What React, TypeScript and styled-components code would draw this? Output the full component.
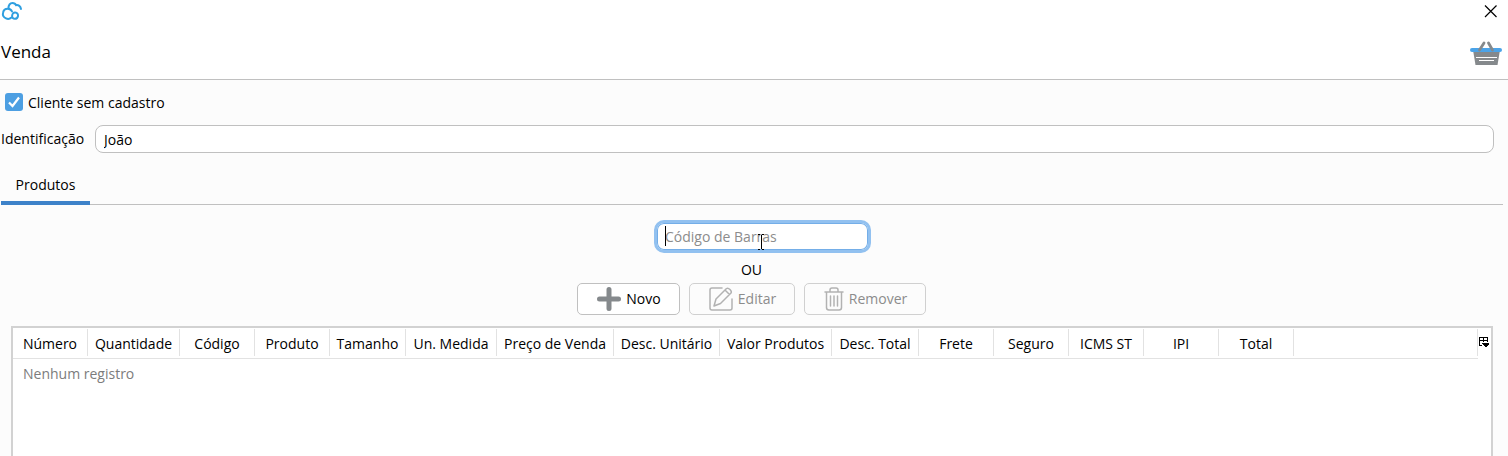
import React from "react";
import styled, { createGlobalStyle } from "styled-components";

const GlobalStyle = createGlobalStyle`
  *, *::before, *::after { box-sizing: border-box; }
  body {
    margin: 0;
    background: #fcfcfc;
    color: #000;
    font-family: "Open Sans", "Noto Sans", sans-serif;
    font-size: 14px;
    line-height: 20px;
  }
  button, input { font: inherit; color: inherit; }
`;

const Window = styled.div`
  display: flex;
  flex-direction: column;
  min-height: 100vh;
`;

const TitleBar = styled.div`
  display: flex;
  justify-content: space-between;
  align-items: flex-start;
  height: 24px;
  padding: 0 10px 0 1px;
  background: #fff;
  svg { display: block; }
`;

const CloseButton = styled.button`
  margin-top: 4px;
  padding: 0;
  border: 0;
  background: none;
`;

const Header = styled.header`
  display: flex;
  justify-content: space-between;
  align-items: center;
  height: 56px;
  padding: 0 5px 0 1px;
  background: #fff;
  border-bottom: 1px solid #c0c0c0;
`;

const Title = styled.h1`
  margin: 0;
  font-size: 17px;
  font-weight: 400;
  line-height: 24px;
`;

const Form = styled.div`
  display: flex;
  flex-direction: column;
  gap: 12px;
  padding: 13px 14px 0 1px;
`;

const CheckLabel = styled.label`
  display: flex;
  align-items: center;
  gap: 5px;
  padding-left: 4px;
`;

const Checkbox = styled.input`
  appearance: none;
  width: 18px;
  height: 18px;
  margin: 0 0 2px;
  border-radius: 3px;
  background: #4d9fe2
    url("data:image/svg+xml,%3Csvg xmlns='http://www.w3.org/2000/svg' viewBox='0 0 18 18'%3E%3Cpath d='M4 9.5l3.5 3.5L14 4.5' fill='none' stroke='white' stroke-width='2.2'/%3E%3C/svg%3E");
`;

const Field = styled.div`
  display: flex;
  align-items: center;
  gap: 8px;
`;

const FieldLabel = styled.label`
  width: 86px;
  white-space: nowrap;
`;

const TextInput = styled.input`
  flex: 1;
  min-width: 0;
  height: 28px;
  padding: 0 8px;
  border: 1px solid #c0c0c0;
  border-radius: 8px;
  background: #fff;
  outline: none;
`;

const Tabs = styled.div`
  display: flex;
  margin: 12px 5px 0 1px;
  border-bottom: 1px solid #c0c0c0;
`;

const Tab = styled.button`
  width: 89px;
  height: 40px;
  margin-bottom: -1px;
  padding: 3px 0 0;
  border: 0;
  border-bottom: 4px solid #3d82c9;
  background: none;
`;

const Entry = styled.div`
  display: flex;
  flex-direction: column;
  align-items: center;
  padding: 15px 5px 0 0;
`;

const BarcodeBox = styled.div`
  position: relative;
  width: 217px;
  margin-left: 22px;
`;

const BarcodeInput = styled.input`
  display: block;
  width: 100%;
  height: 33px;
  padding: 0 8px;
  border: 3px solid #92c1f0;
  border-radius: 10px;
  background: #fff;
  box-shadow: inset 0 0 0 1px #74aee8;
  outline: none;
  &::placeholder { color: #8c8c8c; opacity: 1; }
`;

const Caret = styled.span`
  position: absolute;
  left: 11px;
  top: 6px;
  width: 1px;
  height: 20px;
  background: #000;
`;

const Pointer = styled.svg`
  position: absolute;
  left: 103px;
  top: 14px;
`;

const Or = styled.span`
  margin: 7px 0 3px;
`;

const Actions = styled.div`
  display: flex;
  gap: 9px;
`;

const ActionButton = styled.button<{ $width: number }>`
  display: flex;
  align-items: center;
  justify-content: center;
  gap: 4px;
  width: ${(p) => p.$width}px;
  height: 32px;
  padding: 0;
  border: 1px solid #c0c0c0;
  border-radius: 5px;
  background: #fff;
  &:disabled {
    border-color: #d0d0d0;
    background: #fcfcfc;
    color: #8c8c8c;
  }
`;

const Grid = styled.div`
  flex: 1;
  display: flex;
  align-items: flex-start;
  margin: 11px 15px 0 11px;
  border: 2px solid #d2d2d2;
  border-bottom: 0;
  background: #fff;
`;

const Table = styled.table`
  flex: 1;
  min-width: 0;
  table-layout: fixed;
  border-collapse: collapse;
`;

const HeadCell = styled.th`
  padding: 1px 0 2px;
  border-bottom: 1px solid #e2e2e2;
  font-weight: 400;
  white-space: nowrap;
`;

const HeadText = styled.span`
  display: block;
  height: 27px;
  border-right: 1px solid #e2e2e2;
  line-height: 29px;
`;

const EmptyCell = styled.td`
  padding: 5px 10px;
  color: #7c7c7c;
`;

const ColumnButton = styled.button`
  width: 13px;
  padding: 9px 0 0 1px;
  border: 0;
  background: none;
  svg { display: block; }
`;

const columns: [string, number][] = [
  ["Número", 75],
  ["Quantidade", 92],
  ["Código", 75],
  ["Produto", 75],
  ["Tamanho", 76],
  ["Un. Medida", 91],
  ["Preço de Venda", 117],
  ["Desc. Unitário", 106],
  ["Valor Produtos", 112],
  ["Desc. Total", 87],
  ["Frete", 75],
  ["Seguro", 75],
  ["ICMS ST", 75],
  ["IPI", 75],
  ["Total", 75],
];

const CloudLogo = () => (
  <svg width="22" height="22" viewBox="0 0 22 22" fill="none" stroke="#2f9fe0" strokeWidth="2" strokeLinecap="round">
    <path d="M10.500 17.500C9 18.800 6.700 19.200 5 18.300 2.700 17.300 1.500 15.200 2 13c.4-2.700 2.500-4.300 5-4.200 2 .2 3.400 1.200 4 2.700" />
    <path d="M7.500 8.500C7.500 5 9 3 11.500 3c1.800 0 2.900.7 3.500 2.200 2.500-.5 4.500 1 5 3.800" />
    <path d="M14.200 12.500c2.100.2 3 1.700 2.800 3.500-.3 1.800-1.400 2.800-3.100 2.800-1.800 0-2.900-1.200-2.800-2.900.1-2.100 1.300-3.500 3.100-3.400z" />
  </svg>
);

const CloseIcon = () => (
  <svg width="15" height="15" viewBox="0 0 15 15" stroke="#000" strokeWidth="1.200">
    <path d="M2 1.500l11.500 11.500M13.500 1.500L2 13" />
  </svg>
);

const BasketIcon = () => (
  <svg width="33" height="28" viewBox="0 0 33 28">
    <path d="M3 12h27l-2.500 15h-22z" fill="#85898c" />
    <rect x="0" y="10" width="32" height="4" rx="2" fill="#4ba3e8" />
    <path d="M9.500 12l4.500-7M22.500 12L18.500 5" stroke="#85898c" strokeWidth="2.800" strokeLinecap="round" />
    <path d="M6 19.500h21M9 22.500h15" stroke="#fff" strokeWidth="1" />
  </svg>
);

const PlusIcon = () => (
  <svg width="26" height="26" viewBox="0 0 26 26" stroke="#85898c" strokeWidth="5" strokeLinecap="round">
    <path d="M13 3.500v19M3.500 13h19" />
  </svg>
);

const EditIcon = () => (
  <svg width="26" height="26" viewBox="0 0 26 26" fill="none" stroke="#b2b2b2" strokeWidth="1.500" strokeLinecap="round" strokeLinejoin="round">
    <path d="M14 2H4a2 2 0 0 0-2 2v18a2 2 0 0 0 2 2h18a2 2 0 0 0 2-2V13" />
    <path d="M6 20l2-7L18.500 2.500q1.500-1 3.500 1t1 3.500L12.500 17.500 6 20zM17 4l4.500 4.500" />
  </svg>
);

const TrashIcon = () => (
  <svg width="22" height="26" viewBox="0 0 22 26" fill="none" stroke="#b2b2b2" strokeWidth="1.500" strokeLinecap="round">
    <path d="M2 6h18M7 5.500V4q0-2 2-2h4q2 0 2 2v1.500M3.500 6v15.500q0 2.500 2.500 2.500h10q2.500 0 2.500-2.500V6" />
    <path d="M7.500 10v10M11 10v10M14.500 10v10" />
  </svg>
);

const ColumnsIcon = () => (
  <svg width="11" height="11" viewBox="0 0 11 11" shapeRendering="crispEdges">
    <path d="M.5 9V.5h8V5M.5 3.500h8M4.500 0v5M0 8.500h3" fill="none" stroke="#000" />
    <path d="M3 6h7v1L7 10H6L3 7z" fill="#000" />
  </svg>
);

export default function App() {
  return (
    <Window>
      <GlobalStyle />
      <TitleBar>
        <CloudLogo />
        <CloseButton type="button" aria-label="Fechar">
          <CloseIcon />
        </CloseButton>
      </TitleBar>
      <Header>
        <Title>Venda</Title>
        <BasketIcon />
      </Header>
      <Form>
        <CheckLabel>
          <Checkbox type="checkbox" defaultChecked />
          Cliente sem cadastro
        </CheckLabel>
        <Field>
          <FieldLabel htmlFor="identificacao">Identificação</FieldLabel>
          <TextInput id="identificacao" type="text" defaultValue="João" />
        </Field>
      </Form>
      <Tabs role="tablist">
        <Tab type="button" role="tab" aria-selected="true">Produtos</Tab>
      </Tabs>
      <Entry>
        <BarcodeBox>
          <BarcodeInput type="text" aria-label="Código de Barras" placeholder="Código de Barras" />
          <Caret />
          <Pointer width="8" height="16" viewBox="0 0 8 16" stroke="#000" fill="none" shapeRendering="crispEdges">
            <path d="M1 .5h2M5 .5h2M4 1v14M1 15.500h2M5 15.500h2" />
          </Pointer>
        </BarcodeBox>
        <Or>OU</Or>
        <Actions>
          <ActionButton type="button" $width={103}><PlusIcon />Novo</ActionButton>
          <ActionButton type="button" $width={106} disabled><EditIcon />Editar</ActionButton>
          <ActionButton type="button" $width={122} disabled><TrashIcon />Remover</ActionButton>
        </Actions>
      </Entry>
      <Grid>
        <Table>
          <colgroup>
            {columns.map(([name, width]) => (
              <col key={name} width={width} />
            ))}
            <col />
          </colgroup>
          <thead>
            <tr>
              {columns.map(([name]) => (
                <HeadCell key={name} scope="col"><HeadText>{name}</HeadText></HeadCell>
              ))}
              <HeadCell><HeadText /></HeadCell>
            </tr>
          </thead>
          <tbody>
            <tr>
              <EmptyCell colSpan={columns.length + 1}>Nenhum registro</EmptyCell>
            </tr>
          </tbody>
        </Table>
        <ColumnButton type="button" aria-label="Colunas"><ColumnsIcon /></ColumnButton>
      </Grid>
    </Window>
  );
}
